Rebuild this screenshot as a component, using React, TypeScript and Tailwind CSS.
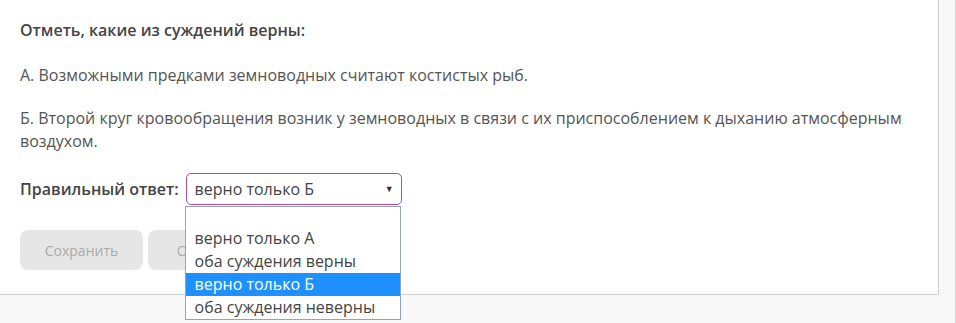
import { useState } from 'react';

const options = ['верно только А', 'оба суждения верны', 'верно только Б', 'оба суждения неверны'];

export default function App() {
  const [value] = useState('верно только Б');

  return (
    <div
      className="flex w-[956px] h-[323px] overflow-hidden bg-[#f8f8f8] border-r border-[#d4d4d4] text-[#555]"
      style={{ fontFamily: '"Open Sans", "Liberation Sans", sans-serif' }}
    >
      <div className="w-[939px] h-[295px] shrink-0 bg-white border-r border-b border-[#cfcfcf] px-5 pt-[19px]">
        <p className="text-[16px] leading-[23px] font-semibold text-[#444] mb-[22px]">
          Отметь, какие из суждений верны:
        </p>
        <p className="text-[16px] leading-[23px] mb-[20px]">
          А. Возможными предками земноводных считают костистых рыб.
        </p>
        <p className="text-[16px] leading-[23px]">
          Б. Второй круг кровообращения возник у земноводных в связи с их приспособлением к дыханию атмосферным
          воздухом.
        </p>

        <div className="flex items-center gap-[7px] mt-[20px]">
          <span className="text-[16px] font-semibold text-[#444]">Правильный ответ:</span>
          <div className="relative">
            <div className="flex items-center justify-between w-[216px] h-[32px] pl-[8px] pr-[7px] rounded-[5px] border border-[#b5489a] bg-white text-[16px] text-[#444]">
              <span>{value}</span>
              <span className="text-[9px] text-[#333]">▼</span>
            </div>

            {/* open list */}
            <div className="absolute left-[-1px] top-[33px] w-[216px] bg-white border border-[#8fa4bd] z-10 text-[16px] text-[#444]">
              <div className="h-[20px]" />
              {options.map((o) => (
                <div
                  key={o}
                  className={
                    o === value
                      ? 'h-[23px] leading-[23px] pl-[9px] bg-[#1e90ff] text-white'
                      : 'h-[23px] leading-[23px] pl-[9px]'
                  }
                >
                  {o}
                </div>
              ))}
            </div>
          </div>
        </div>

        <div className="flex gap-[5px] mt-[25px]">
          <button className="w-[123px] h-[40px] rounded-[8px] bg-[#e6e6e6] text-[14px] text-[#aaa]">Сохранить</button>
          <button className="w-[123px] h-[40px] rounded-[8px] bg-[#e6e6e6] text-[14px] text-[#aaa]">Очистить</button>
        </div>
      </div>
    </div>
  );
}
